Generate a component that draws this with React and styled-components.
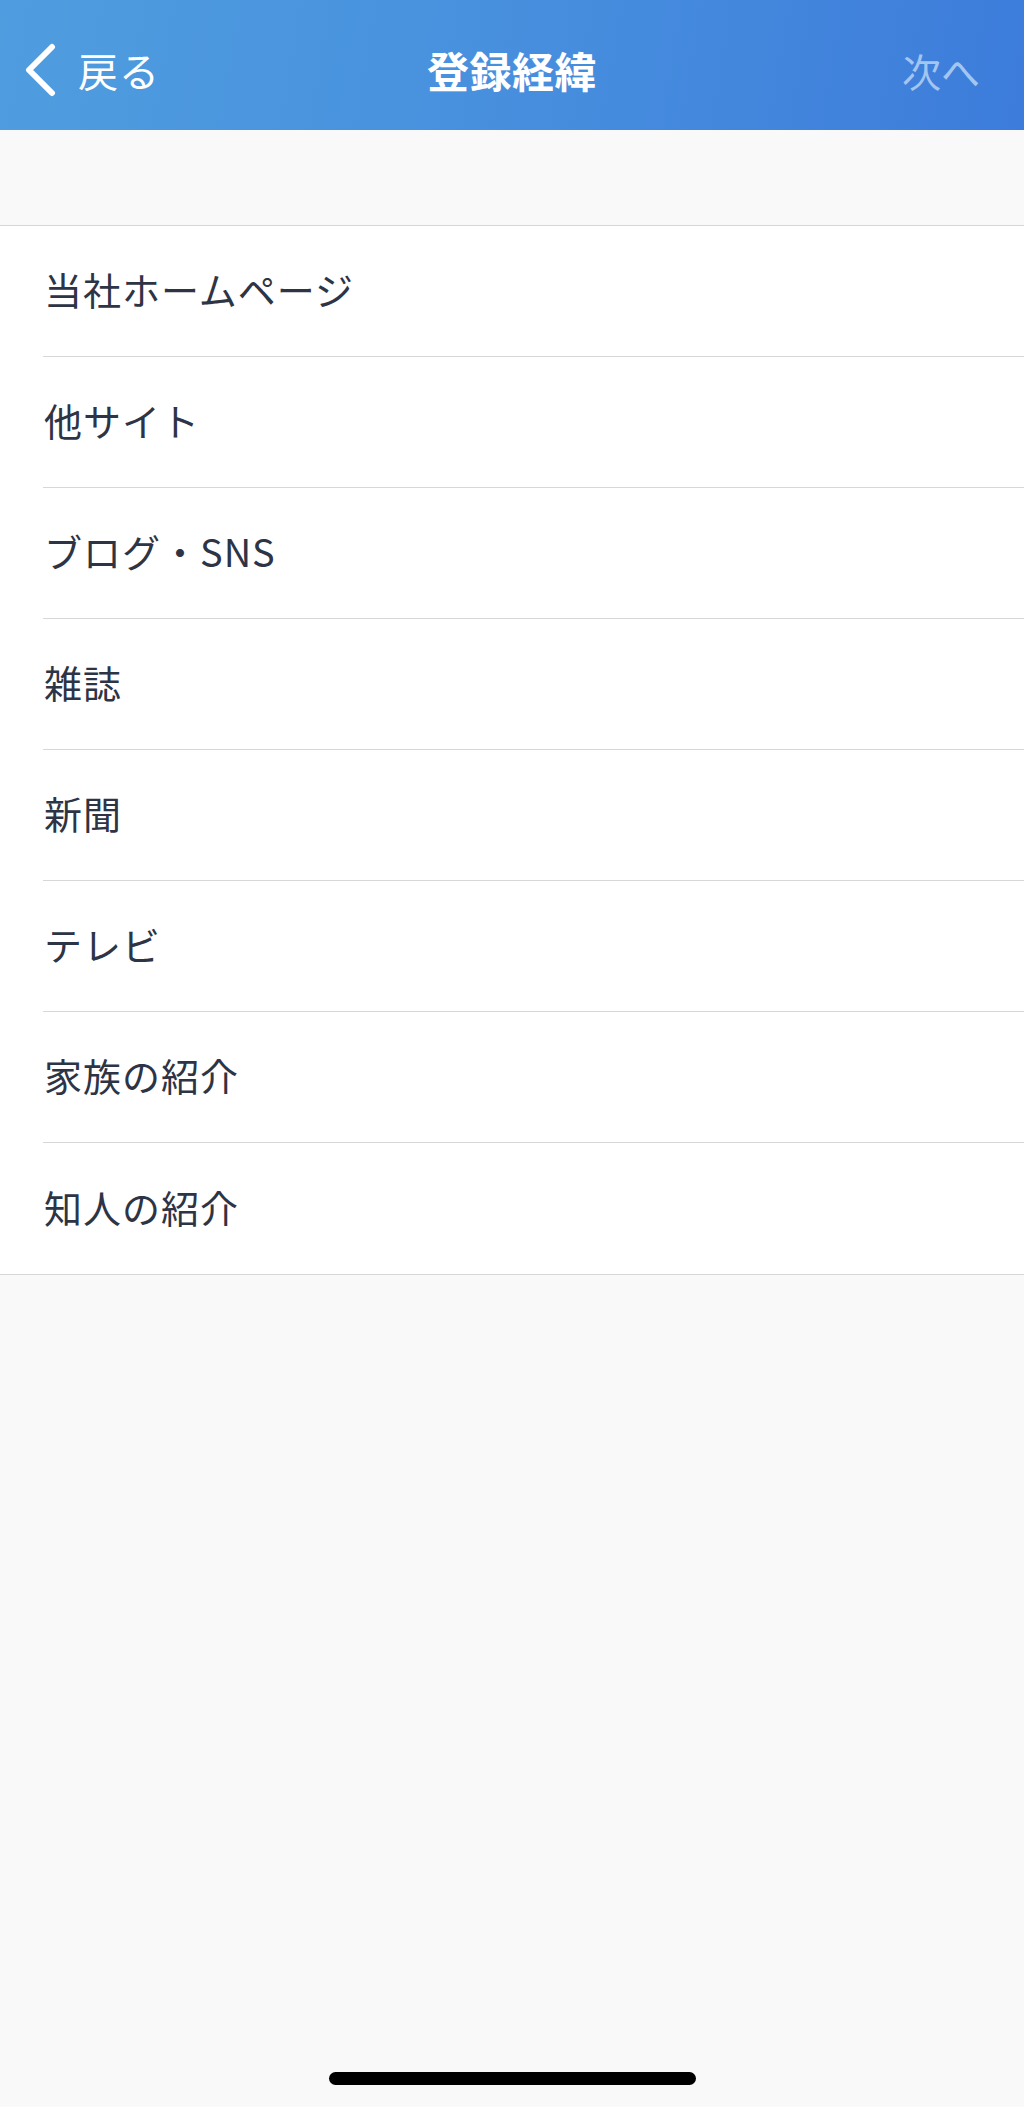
import React from 'react';
import styled, { createGlobalStyle } from 'styled-components';

const GlobalStyle = createGlobalStyle`
  html, body {
    margin: 0;
    padding: 0;
    background-color: #f9f9f9;
  }
  body {
    font-family: "Noto Sans CJK JP", "Noto Sans", sans-serif;
  }
`;

const Page = styled.div`
  display: flex;
  flex-direction: column;
  min-height: 100vh;
  background-color: #f9f9f9;
`;

const Header = styled.header`
  display: grid;
  grid-template-columns: 1fr auto 1fr;
  align-items: center;
  height: 130px;
  padding-top: 10px;
  box-sizing: border-box;
  background: linear-gradient(100deg, #4f9ddf 0%, #4891de 45%, #3d7cdb 100%);
  color: #ffffff;
`;

const BackButton = styled.div`
  display: flex;
  align-items: center;
  gap: 20px;
  padding-left: 24px;
  font-size: 40px;
  line-height: 1;
  letter-spacing: 1px;
`;

const Title = styled.h1`
  margin: 0;
  font-size: 42px;
  font-weight: 700;
  line-height: 1;
  letter-spacing: 0.5px;
`;

const NextButton = styled.div`
  justify-self: end;
  padding-right: 44px;
  font-size: 39px;
  line-height: 1;
  color: #a3c6f1;
`;

const Spacer = styled.div`
  height: 95px;
`;

const List = styled.ul`
  margin: 0;
  padding: 0;
  list-style: none;
  background-color: #ffffff;
  border-top: 1px solid #d7d7d9;
  border-bottom: 1px solid #d7d7d9;
`;

const Row = styled.li`
  display: flex;
  align-items: center;
  height: 131px;
  margin-left: 43px;
  padding: 0 0 5px 1px;
  box-sizing: border-box;
  font-size: 38px;
  letter-spacing: 1px;
  color: #2d3445;
  border-bottom: ${({ $last }) => ($last ? 'none' : '1px solid #d7d7d9')};
`;

const HomeIndicator = styled.div`
  width: 367px;
  height: 13px;
  margin: auto auto 22px;
  border-radius: 7px;
  background-color: #000000;
`;

const Chevron = () => (
  <svg width="34" height="54" viewBox="0 0 34 54" fill="none">
    <path
      d="M28 4 L5 27 L28 50"
      stroke="#ffffff"
      strokeWidth="6"
      strokeLinecap="round"
      strokeLinejoin="round"
    />
  </svg>
);

const sources = [
  '当社ホームページ',
  '他サイト',
  'ブログ・SNS',
  '雑誌',
  '新聞',
  'テレビ',
  '家族の紹介',
  '知人の紹介',
];

const App = () => (
  <Page>
    <GlobalStyle />
    <Header>
      <BackButton>
        <Chevron />
        <span>戻る</span>
      </BackButton>
      <Title>登録経緯</Title>
      <NextButton>次へ</NextButton>
    </Header>
    <Spacer />
    <List>
      {sources.map((label, i) => (
        <Row key={label} $last={i === sources.length - 1}>
          {label}
        </Row>
      ))}
    </List>
    <HomeIndicator />
  </Page>
);

export default App;
